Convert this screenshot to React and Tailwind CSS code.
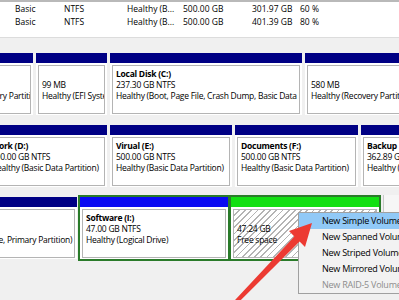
import React from 'react'

const volumes = [
  { layout: 'Basic', fs: 'NTFS', status: 'Healthy (B...', cap: '500.00 GB', free: '301.97 GB', pct: '60 %' },
  { layout: 'Basic', fs: 'NTFS', status: 'Healthy (B...', cap: '500.00 GB', free: '401.39 GB', pct: '80 %' },
]

const menuItems = [
  { label: 'New Simple Volume...', active: true },
  { label: 'New Spanned Volume...' },
  { label: 'New Striped Volume...' },
  { label: 'New Mirrored Volume...' },
  { label: 'New RAID-5 Volume...', disabled: true },
]

function Partition({ width, bar = 'bg-[#000084]', title, lines, hatch }) {
  return (
    <div className={`flex flex-col shrink-0 bg-white ${width}`}>
      <div className={`h-[10px] ${bar}`} />
      <div className="flex-1 p-[2px] pb-[1px]">
        <div
          className={`h-full border border-[#b4b4b4] pl-[3px] pt-[2px] leading-[11px] whitespace-nowrap overflow-hidden ${
            hatch ? 'bg-[image:repeating-linear-gradient(135deg,#ffffff_0px,#ffffff_3.2px,#b4b4b4_3.2px,#b4b4b4_4.4px)]' : ''
          }`}
        >
          <p className="font-bold h-[11px]">{title}</p>
          {lines.map((l) => (
            <p key={l}>{l}</p>
          ))}
        </div>
      </div>
    </div>
  )
}

function App() {
  return (
    <div className="relative w-[399px] h-[300px] overflow-hidden bg-[#f0f0f0] text-black text-[8.5px] tracking-[-0.25px] font-['Open_Sans','Noto_Sans',sans-serif]">
      {/* volume list */}
      <div className="h-[38px] bg-white border-t-2 border-t-[#b9b9b9] border-b border-b-[#dcdcdc] pt-[1px] tracking-normal">
        {volumes.map((v, i) => (
          <div key={i} className="flex h-[13px] items-center whitespace-nowrap">
            <span className="w-[64px] pl-[15px] shrink-0">{v.layout}</span>
            <span className="w-[63px] shrink-0">{v.fs}</span>
            <span className="w-[56px] shrink-0">{v.status}</span>
            <span className="w-[69px] shrink-0">{v.cap}</span>
            <span className="w-[48px] shrink-0">{v.free}</span>
            <span>{v.pct}</span>
          </div>
        ))}
      </div>
      {/* end volume list */}

      {/* disks */}
      <div className="flex flex-col gap-[6px] pt-[13px]">
        {/* disk 0 */}
        <div className="flex gap-[3px] h-[66px] py-[2px] -ml-[66px]">
          <Partition width="w-[99px]" lines={['450 MB', 'Healthy (Recovery Partition)']} />
          <Partition width="w-[71px]" lines={['99 MB', 'Healthy (EFI System Partition)']} />
          <Partition
            width="w-[192px]"
            title="Local Disk  (C:)"
            lines={['237.30 GB NTFS', 'Healthy (Boot, Page File, Crash Dump, Basic Data Partition)']}
          />
          <Partition width="w-[120px]" lines={['580 MB', 'Healthy (Recovery Partition)']} />
        </div>

        {/* disk 1 */}
        <div className="flex gap-[3px] h-[66px] py-[2px] -ml-[15px]">
          <Partition width="w-[122px]" title="Work  (D:)" lines={['500.00 GB NTFS', 'Healthy (Basic Data Partition)']} />
          <Partition width="w-[122px]" title="Virual  (E:)" lines={['500.00 GB NTFS', 'Healthy (Basic Data Partition)']} />
          <Partition width="w-[123px]" title="Documents  (F:)" lines={['500.00 GB NTFS', 'Healthy (Basic Data Partition)']} />
          <Partition width="w-[100px]" title="Backup" lines={['362.89 GB NTFS', 'Healthy (Basic Data Partition)']} />
        </div>

        {/* disk 2 */}
        <div className="flex h-[66px] -ml-[89px]">
          <div className="flex py-[2px]">
            <Partition
              width="w-[166px]"
              title="System Reserved"
              lines={['500 MB NTFS', 'Healthy (System, Active, Primary Partition)']}
            />
          </div>
          <div className="ml-[1px] flex gap-[3px] border-2 border-[#2a7b2a] bg-[#2a7b2a] w-[303px] shrink-0">
            <Partition width="w-[148px]" bar="bg-[#0a0af2]" title="Software  (I:)" lines={['47.00 GB NTFS', 'Healthy (Logical Drive)']} />
            <Partition width="w-[148px]" bar="bg-[#12e012]" hatch lines={['47.24 GB', 'Free space']} />
          </div>
          <div className="ml-[2px] w-[30px] border-l border-[#c8c8c8] bg-[#f6f6f6] shrink-0" />
        </div>
      </div>
      {/* end disks */}

      {/* context menu */}
      <div className="absolute left-[298px] top-[212px] w-[120px] bg-[#f2f2f2] border border-[#a0a0a0] text-[9px]">
        {menuItems.map((m) => (
          <div
            key={m.label}
            className={`h-[16px] flex items-center pl-[23px] whitespace-nowrap ${m.active ? 'bg-[#91c9f7]' : ''} ${
              m.disabled ? 'text-[#8d8d8d]' : ''
            }`}
          >
            {m.label}
          </div>
        ))}
      </div>

      {/* arrow */}
      <svg className="absolute left-0 top-0 pointer-events-none" width="399" height="300" viewBox="0 0 399 300">
        <polygon
          points="312,223 305,247 299.6,241.4 237.5,303.4 234.5,300.6 294.4,236.6 289,231"
          fill="#ec3a32"
        />
      </svg>
    </div>
  )
}

export default App
